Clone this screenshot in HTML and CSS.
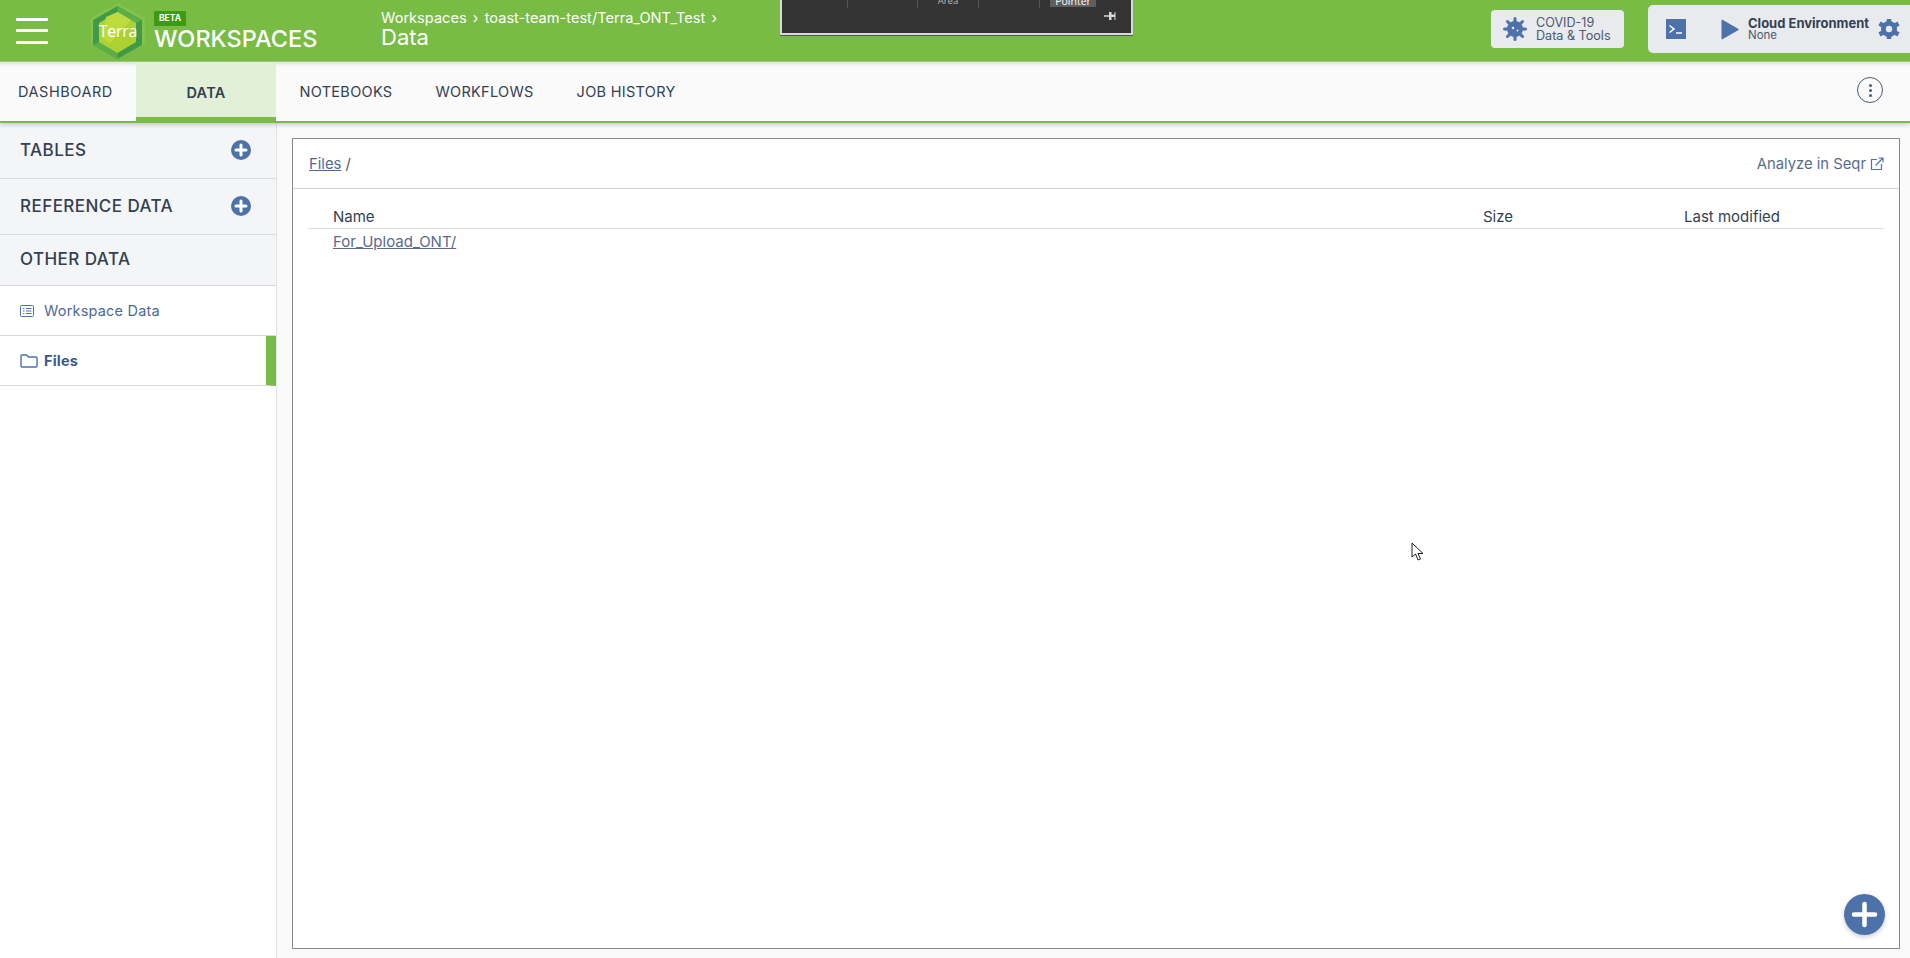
FILE: index.html
```html
<!DOCTYPE html>
<html lang="en">
<head>
<meta charset="utf-8">
<title>Data</title>
<link rel="stylesheet" href="styles.css">
</head>
<body>
<header class="topbar">
  <button class="burger" aria-label="Menu"><span></span><span></span><span></span></button>
  <div class="logo">
    <svg width="56" height="56" viewBox="0 0 56 56">
      <path d="M28 0 L55 15 V41 L28 56 L1 41 V15 Z" fill="#84c24c"/>
      <path d="M27.500 3 L52 17 V42 L27.500 56 L3 42 V17 Z" fill="#3f9b49"/>
      <path d="M27.500 3 L52 17 L44 21 L27.500 11 Z M3 42 L11 38 L27.500 48 V56 Z" fill="#5cae4a"/>
      <path d="M27.500 9 L46 20 V39 L27.500 50 L9 39 V20 Z" fill="#add133"/>
      <path d="M16 14 L27.500 9 L41 17 L20 40 L12 35 Z" fill="#bedb3e"/>
    </svg>
    <span class="logo-word">Terra</span>
  </div>
  <div class="product">
    <span class="beta">BETA</span>
    <span class="product-name">WORKSPACES</span>
  </div>
  <div class="crumbs">
    <div class="crumb-path">Workspaces &nbsp;›&nbsp; toast-team-test/Terra_ONT_Test &nbsp;›</div>
    <div class="crumb-title">Data</div>
  </div>
  <div class="overlay-slot">
    <div class="toolbar-overlay">
      <div class="overlay-row">
        <span class="ov-cell ov-first"></span><span class="ov-cell ov-second"></span><span class="ov-cell">Area</span><span class="ov-cell"></span><span class="ov-active">Pointer</span>
      </div>
      <span class="ov-pin">
        <svg width="12" height="10" viewBox="0 0 12 10"><path d="M0 4.300H5V1H7.500V3.500H10.500V1H11.500V9H10.500V6H7.500V9H5V5.700H0Z" fill="#d8d8d8"/></svg>
      </span>
    </div>
  </div>
  <a class="covid">
    <svg width="24" height="24" viewBox="0 0 24 24"><circle cx="12" cy="12" r="8" fill="#4d72aa"/><path d="M12 1.500V22.500M1.500 12H22.500M4.500 4.500L19.500 19.500M19.500 4.500L4.500 19.500" stroke="#4d72aa" stroke-width="3" stroke-linecap="round"/><circle cx="10" cy="11" r="1.300" fill="#e8eaee"/><circle cx="14.500" cy="13.500" r="1" fill="#e8eaee"/></svg>
    <span class="covid-text">COVID-19<br>Data &amp; Tools</span>
  </a>
  <div class="cloud">
    <svg class="term" width="20" height="20" viewBox="0 0 20 20"><rect width="20" height="20" fill="#4d72aa"/><path d="M3.500 6.500L8 10L3.500 13.500" fill="none" stroke="#fff" stroke-width="1.500"/><path d="M10 14H16" stroke="#fff" stroke-width="1.500"/></svg>
    <svg class="play" width="18" height="21" viewBox="0 0 18 21"><path d="M1 1 L17.500 10.500 L1 20 Z" fill="#4d72aa" stroke="#4d72aa" stroke-linejoin="round"/></svg>
    <div class="cloud-text"><div class="cloud-name">Cloud Environment</div><div class="cloud-sub">None</div></div>
    <svg class="gear" width="22" height="22" viewBox="0 0 22 22"><circle cx="11" cy="11" r="8" fill="#4d72aa"/><path d="M11 1V21M1.500 5.500L20.500 16.500M20.500 5.500L1.500 16.500" stroke="#4d72aa" stroke-width="4.500"/><circle cx="11" cy="11" r="3.200" fill="#e8eaee"/></svg>
  </div>
</header>

<nav class="tabs">
  <a class="tab tab-first">DASHBOARD</a>
  <a class="tab tab-active">DATA</a>
  <a class="tab">NOTEBOOKS</a>
  <a class="tab">WORKFLOWS</a>
  <a class="tab">JOB HISTORY</a>
  <span class="tab-spacer"></span>
  <button class="kebab" aria-label="More"><i></i><i></i><i></i></button>
</nav>

<main class="layout">
  <aside class="sidebar">
    <div class="side-head side-tall"><span>TABLES</span><svg class="plus" width="20" height="20" viewBox="0 0 20 20"><circle cx="10" cy="10" r="10" fill="#4d72aa"/><path d="M10 5V15M5 10H15" stroke="#fff" stroke-width="3" stroke-linecap="round"/></svg></div>
    <div class="side-head side-tall"><span>REFERENCE DATA</span><svg class="plus" width="20" height="20" viewBox="0 0 20 20"><circle cx="10" cy="10" r="10" fill="#4d72aa"/><path d="M10 5V15M5 10H15" stroke="#fff" stroke-width="3" stroke-linecap="round"/></svg></div>
    <div class="side-head side-short"><span>OTHER DATA</span></div>
    <a class="side-item">
      <svg width="14" height="12" viewBox="0 0 14 12"><rect x="0.500" y="0.500" width="13" height="11" rx="1" fill="none" stroke="#4d72aa"/><path d="M3 3.500H4.500M6 3.500H11.500M3 6H4.500M6 6H11.500M3 8.500H4.500M6 8.500H11.500" stroke="#4d72aa"/></svg>
      <span>Workspace Data</span>
    </a>
    <a class="side-item side-current">
      <svg width="18" height="14" viewBox="0 0 18 14"><path d="M1 12V2Q1 1 2 1H6.500L8.500 3H16Q17 3 17 4V12Q17 13 16 13H2Q1 13 1 12Z" fill="none" stroke="#4d72aa" stroke-width="1.400"/></svg>
      <span>Files</span>
    </a>
  </aside>
  <section class="content">
    <div class="panel">
      <div class="panel-head">
        <div class="panel-crumb"><a class="link">Files</a> /</div>
        <a class="seqr">Analyze in Seqr
          <svg width="14" height="14" viewBox="0 0 14 14"><path d="M7 2.500H1.500V12.500H11.500V7" fill="none" stroke="#4d72aa" stroke-width="1.200"/><path d="M5.500 8.500L12.500 1.500M8.500 1H13V5.500" fill="none" stroke="#4d72aa" stroke-width="1.200"/></svg>
        </a>
      </div>
      <div class="file-table">
        <div class="file-row file-header">
          <span class="col-name">Name</span><span class="col-size">Size</span><span class="col-mod">Last modified</span>
        </div>
        <div class="file-row">
          <a class="col-name link link-muted">For_Upload_ONT/</a>
        </div>
      </div>
      <button class="fab" aria-label="Add"><svg width="41" height="41" viewBox="0 0 41 41"><circle cx="20.500" cy="20.500" r="20.500" fill="#4d72aa"/><path d="M20.500 10V31M10 20.500H31" stroke="#fff" stroke-width="4.500" stroke-linecap="round"/></svg></button>
      <svg class="cursor" width="14" height="20" viewBox="0 0 14 20"><path d="M1 1V15L4.500 12L7 18L9.500 17L7 11.500H12Z" fill="#fff" stroke="#222" stroke-width="1"/></svg>
    </div>
  </section>
</main>
</body>
</html>
```

FILE: styles.css
```css
* { box-sizing: border-box; }
html, body { margin: 0; padding: 0; height: 100%; overflow: hidden; }
body {
  font-family: "Inter", "Open Sans", "Liberation Sans", sans-serif;
  background: #fafafa;
  color: #333f52;
  display: flex;
  flex-direction: column;
  height: 958px;
}
button { border: 0; background: none; padding: 0; }

.topbar {
  flex: 0 0 62px;
  height: 62px;
  background: #78bb45;
  border-bottom: 1px solid #a0cf7c;
  display: flex;
  align-items: center;
  color: #fff;
  position: relative;
}
.burger {
  width: 32px; height: 26px; margin-left: 16px;
  display: flex; flex-direction: column; justify-content: space-between;
}
.burger span { display: block; height: 3px; background: #fff; border-radius: 1px; }
.logo { position: relative; width: 56px; height: 56px; margin-left: 42px; flex: none; }
.logo svg { display: block; }
.logo-word {
  position: absolute; inset: 0; display: flex; align-items: center; justify-content: center;
  font-family: "Open Sans", sans-serif; font-size: 16px; color: #fff; letter-spacing: -0.300px;
}
.product { margin-left: 8px; width: 172px; padding-top: 2px; display: flex; flex-direction: column; align-items: flex-start; }
.beta {
  background: #3d9a12; color: #fff; font-size: 8.500px; font-weight: 700;
  padding: 0 5px; height: 15px; line-height: 15px; border-radius: 1px;
}
.product-name { font-size: 23.500px; line-height: 26px; font-weight: 500; letter-spacing: 0; }
.crumbs { margin-left: 55px; width: 400px; margin-top: -6px; }
.crumb-path { font-size: 14.600px; line-height: 18px; word-spacing: -1px; }
.crumb-title { font-size: 22px; line-height: 20px; font-weight: 400; }
.overlay-slot { align-self: flex-start; width: 353px; margin-left: -1px; }
.toolbar-overlay {
  height: 35px; background: #333; border: 2px solid #d9d9d9; border-top: 0;
  box-shadow: 0 1px 0 #555;
  position: relative; display: flex; flex-direction: column;
}
.overlay-row { display: flex; height: 8px; overflow: hidden; }
.ov-cell {
  width: 61px; height: 8px; font-size: 9.500px; line-height: 2px; color: #bbb; text-align: center;
  border-right: 1px solid #555;
  font-family: "Open Sans", sans-serif;
}
.ov-first { width: 66px; }
.ov-second { width: 70px; }
.ov-active {
  width: 46px; height: 7px; margin-left: 10px; background: #5f5f5f; color: #fff; font-family: "Open Sans", sans-serif;
  font-size: 10.500px; line-height: 2px; text-align: center;
}
.ov-pin { position: absolute; right: 15px; top: 11px; line-height: 0; }
.covid {
  position: absolute; left: 1491px; top: 10px; width: 133px; height: 38px;
  background: #e8eaee; border-radius: 4px; color: #4a5a70;
  display: flex; align-items: center; padding-left: 12px; gap: 9px;
}
.covid-text { font-size: 12.600px; line-height: 13px; margin-top: -1px; }
.cloud {
  position: absolute; left: 1648px; top: 5px; width: 262px; height: 48px;
  background: #e8eaee; border-radius: 5px 0 0 5px;
  display: flex; align-items: center; color: #333f52;
}
.term { margin-left: 18px; }
.play { margin-left: 35px; }
.cloud-text { margin-left: 9px; width: 131px; }
.cloud-name { font-size: 13px; line-height: 13px; font-weight: 700; color: #333f52; white-space: nowrap; }
.cloud-sub { font-size: 11.500px; line-height: 11px; color: #4a5a70; }
.gear { margin-left: -1px; }

.tabs {
  flex: 0 0 61px;
  height: 61px;
  background: #fafafa;
  display: flex;
  align-items: stretch;
  border-bottom: 2px solid #78bb45;
  box-shadow: 0 2px 4px rgba(0,0,0,.18), inset 0 6px 5px -5px rgba(0,0,0,.15);
  position: relative;
  z-index: 2;
}
.tab {
  display: flex; align-items: center; padding: 0 21.500px 1px;
  font-size: 14.500px; letter-spacing: 0.300px; font-weight: 400; color: #333f52;
}
.tab-first { width: 136px; padding: 0 0 1px 18px; letter-spacing: 0.550px; }
.tab-active {
  width: 140px; justify-content: center; padding: 5px 0 0;
  background: #e2f0d8; font-weight: 600;
  border-bottom: 6px solid #78bb45;
  margin-bottom: -2px; margin-right: 2px;
}
.tab-spacer { flex: 1; }
.kebab {
  width: 26px; height: 26px; border: 1px solid #4a5a70; border-radius: 50%;
  margin: 15px 27px 0 0;
  display: flex; flex-direction: column; align-items: center; justify-content: center; gap: 2px;
}
.kebab i { width: 3px; height: 3px; border-radius: 50%; background: #4a5a70; display: block; }

.layout { flex: 1; display: flex; min-height: 0; }
.sidebar {
  width: 277px; flex: none; background: #fff;
  border-right: 1px solid #e0e2e5;
  box-shadow: 1px 0 3px rgba(0,0,0,.08);
}
.side-head {
  background: #f4f5f6; border-bottom: 1px solid #d9dadd;
  display: flex; align-items: center; justify-content: space-between;
  padding: 0 25px 2px 20px;
  font-size: 17px; letter-spacing: 0.450px; font-weight: 500; color: #333f52;
}
.side-tall { height: 56px; }
.side-short { height: 51px; }
.side-item {
  height: 50px; display: flex; align-items: center; gap: 10px; padding: 0 0 0 20px;
  border-bottom: 1px solid #d9dadd; font-size: 14.500px; letter-spacing: 0.200px; color: #4d6a96; position: relative;
}
.side-item svg { flex: none; }
.side-current { font-weight: 700; color: #3a5a8c; gap: 6px; border-right: 10px solid #78bb45; }
.content { flex: 1; padding: 15px 10px 9px 15px; background: #fafafa; min-width: 0; }
.panel {
  height: 100%; border: 1px solid #888; background: #fff; position: relative;
}
.panel-head {
  height: 50px; border-bottom: 1px solid #cfcfcf;
  display: flex; align-items: center; justify-content: space-between;
  padding: 0 15px 0 16px; font-size: 14.800px; color: #4a5a70;
}
.link { color: #4d6a96; text-decoration: underline; }
.link-muted { color: #5a6b8c; }
.seqr { color: #5a6b8c; display: flex; align-items: center; gap: 4px; }
.file-table { padding: 18px 15px 0 15px; font-size: 15px; }
.file-row { display: flex; height: 24px; align-items: center; }
.file-header { border-bottom: 1px solid #dcdcdc; height: 22px; color: #333f52; padding-bottom: 2px; }
.col-name { margin-left: 25px; width: 1150px; flex: none; }
.col-size { width: 201px; flex: none; }
.col-mod { flex: none; }
.fab {
  position: absolute; right: 14px; bottom: 13px; width: 41px; height: 41px; line-height: 0;
  border-radius: 50%; box-shadow: 0 2px 5px rgba(0,0,0,.2);
}
.cursor { position: absolute; left: 1118px; top: 403px; }
```
